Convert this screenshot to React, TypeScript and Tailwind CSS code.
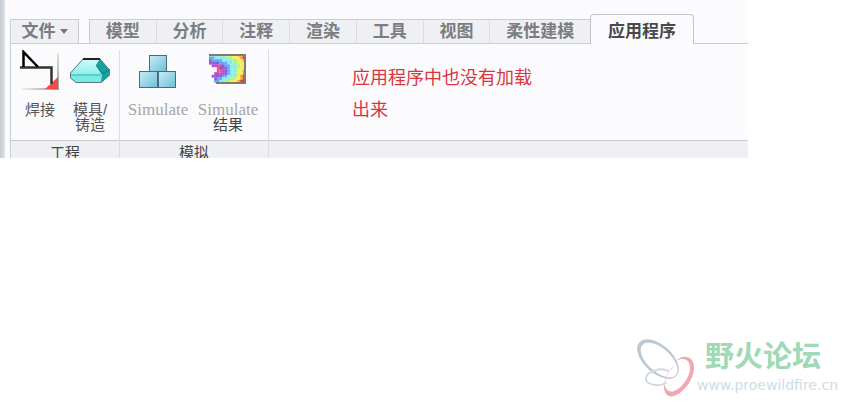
import React from 'react';
import clsx from 'clsx';

const TABS = ['模型', '分析', '注释', '渲染', '工具', '视图', '柔性建模'];

// 结果云图的像素行，每个字符对应一种颜色
const FRINGE_ROWS = [
  'cccccggyyyyoor',
  'bbcccccggyyyor',
  'vbbbbccccggyyo',
  'pvvvbbbccggyyy',
  '.ppmpvbbccggyy',
  '...mrpvbccgyyy',
  '...mmpvbccgyyo',
  '..ppmpvbccgyyo',
  '.ppvvbbccggyor',
  '..vbbcccggyyor',
  '..bbccggyyyorr',
];

const FRINGE_COLORS: Record<string, string> = {
  b: '#6aa5f5',
  c: '#86ecf2',
  g: '#a8f39a',
  y: '#f2ef5a',
  o: '#f79a3a',
  r: '#d8442f',
  m: '#e8559a',
  p: '#b44fd0',
  v: '#7a62e0',
};

const WeldIcon = () => (
  <svg width="40" height="40" viewBox="0 0 40 40">
    <defs>
      <linearGradient id="weldV" x1="0" y1="0" x2="0" y2="1">
        <stop offset="0" stopColor="#e2e2e2" />
        <stop offset="1" stopColor="#999" />
      </linearGradient>
      <linearGradient id="weldH" x1="0" y1="0" x2="1" y2="0">
        <stop offset="0" stopColor="#eee" />
        <stop offset="1" stopColor="#999" />
      </linearGradient>
    </defs>
    <rect x="37" y="3" width="2" height="37" fill="url(#weldV)" />
    <rect x="2" y="38" width="37" height="2" fill="url(#weldH)" />
    <path d="M38 27V39H25Z" fill="#f04a4a" />
    <path d="M0 17.5H31.5V34" fill="none" stroke="#333" strokeWidth="2.5" />
    <path d="M3.5 17V2L18 17" fill="none" stroke="#000" strokeWidth="2.5" />
  </svg>
);

const MoldIcon = () => (
  <svg width="40" height="40" viewBox="0 0 40 40">
    <defs>
      <linearGradient id="moldTop" x1="0" y1="0" x2="0" y2="1">
        <stop offset="0" stopColor="#d3fbfa" />
        <stop offset="1" stopColor="#8bf0ec" />
      </linearGradient>
    </defs>
    <path d="M13 9H30L40 20V25L31 33H6L0 28V23Z" fill="#76ece7" />
    <path d="M13 9H30L27 15L32 25H0V23Z" fill="url(#moldTop)" />
    <path d="M30 9L40 20V25L31 33L32 24L26 15Z" fill="#16a39f" />
    <path d="M26 15L32 24L39 20" fill="none" stroke="#0d7a78" />
    <path d="M1 25H31" fill="none" stroke="#4aa7aa" />
    <path d="M13 9L0.5 23V28L6 32.5H31L39.5 25V20L30 9" fill="none" stroke="#5b7b80" />
    <path d="M13 9H30" stroke="#222" strokeWidth="2" />
  </svg>
);

const CubesIcon = () => (
  <svg width="40" height="40" viewBox="0 0 40 40">
    <defs>
      <linearGradient id="cube" x1="0" y1="0" x2="1" y2="1">
        <stop offset="0" stopColor="#c9edf6" />
        <stop offset="1" stopColor="#6cbfd6" />
      </linearGradient>
    </defs>
    <g fill="url(#cube)" stroke="#4b6a7b">
      <rect x="11.5" y="5.5" width="17" height="16" />
      <rect x="1.5" y="21.5" width="18" height="16" />
      <rect x="20.5" y="21.5" width="17" height="16" />
    </g>
  </svg>
);

const FringeIcon = () => (
  <svg width="40" height="40" viewBox="0 0 40 40">
    {FRINGE_ROWS.map((row, y) =>
      row.split('').map((c, x) =>
        c === '.' ? null : (
          <rect key={`${x}-${y}`} x={1 + x * 2.6} y={4 + y * 2.6} width="2.8" height="2.8" fill={FRINGE_COLORS[c]} />
        )
      )
    )}
    <path d="M1 5H37V33H8" fill="none" stroke="#84796f" strokeWidth="2" />
  </svg>
);

interface ToolProps {
  icon: React.ReactNode;
  className: string;
  children: React.ReactNode;
}

const Tool: React.FC<ToolProps> = ({ icon, className, children }) => (
  <button className={clsx('flex flex-col items-center text-[15px] leading-[15px]', className)}>
    {icon}
    <span className="mt-3 flex flex-col items-center whitespace-nowrap">{children}</span>
  </button>
);

interface GroupProps {
  title: string;
  className: string;
  children: React.ReactNode;
}

const Group: React.FC<GroupProps> = ({ title, className, children }) => (
  <section className={clsx('flex flex-col border-r border-[#dcdee0]', className)}>
    <div className="flex h-[90px] items-start">{children}</div>
    <h2 className="h-[18px] overflow-hidden border-t border-[#c9cccf] bg-[#eff0f3] pt-[3px] text-center text-[15px] leading-[18px] text-[#444]">
      {title}
    </h2>
  </section>
);

// 两个月牙环加一段浅灰弧线
const ForumLogo = () => (
  <svg width="60" height="60" viewBox="0 0 60 60" fill="none">
    <g transform="rotate(42 21 20)" fillRule="evenodd">
      <path
        d="M-4 20a25 14 0 1 0 50 0a25 14 0 1 0 -50 0ZM0 20a22.5 11.5 0 1 0 45 0a22.5 11.5 0 1 0 -45 0Z"
        fill="#bcc8d3"
      />
    </g>
    <path d="M31 32C24 28 10 32 9 39C8 46 22 48 29 44" stroke="#d3d8e0" strokeWidth="2" strokeLinecap="round" />
    <path
      d="M39 22C46 15 56 17 57 27C58 39 47 54 37 57C30 59 26 53 27 44C28 50 32 54 37 52C45 49 53 38 53 29C53 20 46 18 39 22Z"
      fill="#f0a9b0"
    />
    <path d="M27 46C28 39 31 33 36 28" stroke="#f5d3d8" />
  </svg>
);

const App: React.FC = () => (
  <div className="flex min-h-screen flex-col justify-between bg-white font-['Liberation_Sans','Noto_Sans_CJK_SC',sans-serif]">
    <div className="mr-[98px] flex overflow-hidden bg-[#fbfbfd]">
      <div className="w-[5px] shrink-0 bg-linear-to-r from-[#c6cbd1] to-[#dfe2e6]" />
      <div className="ml-[5px] flex min-w-0 grow flex-col pt-[14px]">
        {/* 选项卡 */}
        <div className="flex h-[30px] items-end">
          <button className="flex h-[25px] w-[69px] items-center justify-center gap-1 border border-[#cbced1] bg-[#eff0f3] text-[17px] leading-5 font-bold text-[#7b7d80]">
            文件
            <svg width="8" height="5" viewBox="0 0 8 5">
              <path d="M0 0H8L4 5Z" fill="#75777a" />
            </svg>
          </button>
          <div className="w-[10px] self-stretch border-b border-[#cbced1]" />
          <nav className="flex w-[501px] shrink-0">
            {TABS.map((tab) => (
              <button
                key={tab}
                className="h-[25px] grow border-y border-l border-y-[#cbced1] border-l-[#d9dbde] bg-[#eff0f3] text-[17px] leading-5 font-bold text-[#7b7d80] first:border-l-[#cbced1]"
              >
                {tab}
              </button>
            ))}
          </nav>
          <button className="h-[30px] w-[104px] shrink-0 rounded-t-sm border border-b-0 border-[#c3c6c9] pt-1 text-[17px] leading-5 font-bold text-[#48494c]">
            应用程序
          </button>
          <div className="grow self-stretch border-b border-[#cbced1]" />
        </div>

        {/* 功能区 */}
        <div className="flex border-l border-[#cbced1] pt-[6px]">
          <Group title="工程" className="w-[109px]">
            <Tool icon={<WeldIcon />} className="w-[58px] text-[#555]">焊接</Tool>
            <Tool icon={<MoldIcon />} className="w-[42px] text-[#555]">
              <span>模具/</span>
              <span>铸造</span>
            </Tool>
          </Group>
          <Group title="模拟" className="w-[149px]">
            <Tool icon={<CubesIcon />} className="w-[76px] text-[#a5a6a8]">
              <span className="font-['Liberation_Serif',serif] text-[17px]">Simulate</span>
            </Tool>
            <Tool icon={<FringeIcon />} className="w-[64px] text-[#444]">
              <span className="font-['Liberation_Serif',serif] text-[17px] text-[#a5a6a8]">Simulate</span>
              <span>结果</span>
            </Tool>
          </Group>
          <div className="flex grow flex-col">
            <p className="ml-[83px] h-[90px] w-[190px] pt-3 text-lg leading-8 text-[#d9363e]">
              应用程序中也没有加载出来
            </p>
            <div className="h-[18px] border-t border-[#c9cccf] bg-[#eff0f3]" />
          </div>
        </div>
      </div>
    </div>

    <footer className="flex items-start justify-end pr-2 pb-1">
      <ForumLogo />
      <div className="pt-[2px]">
        <strong className="block pl-2 text-[29px] leading-8 text-[#a0d9b5]">野火论坛</strong>
        <a href="http://www.proewildfire.cn" className="block font-['DejaVu_Sans',sans-serif] text-sm leading-6 text-[#cbdde8]">
          www.proewildfire.cn
        </a>
      </div>
    </footer>
  </div>
);

export default App;
